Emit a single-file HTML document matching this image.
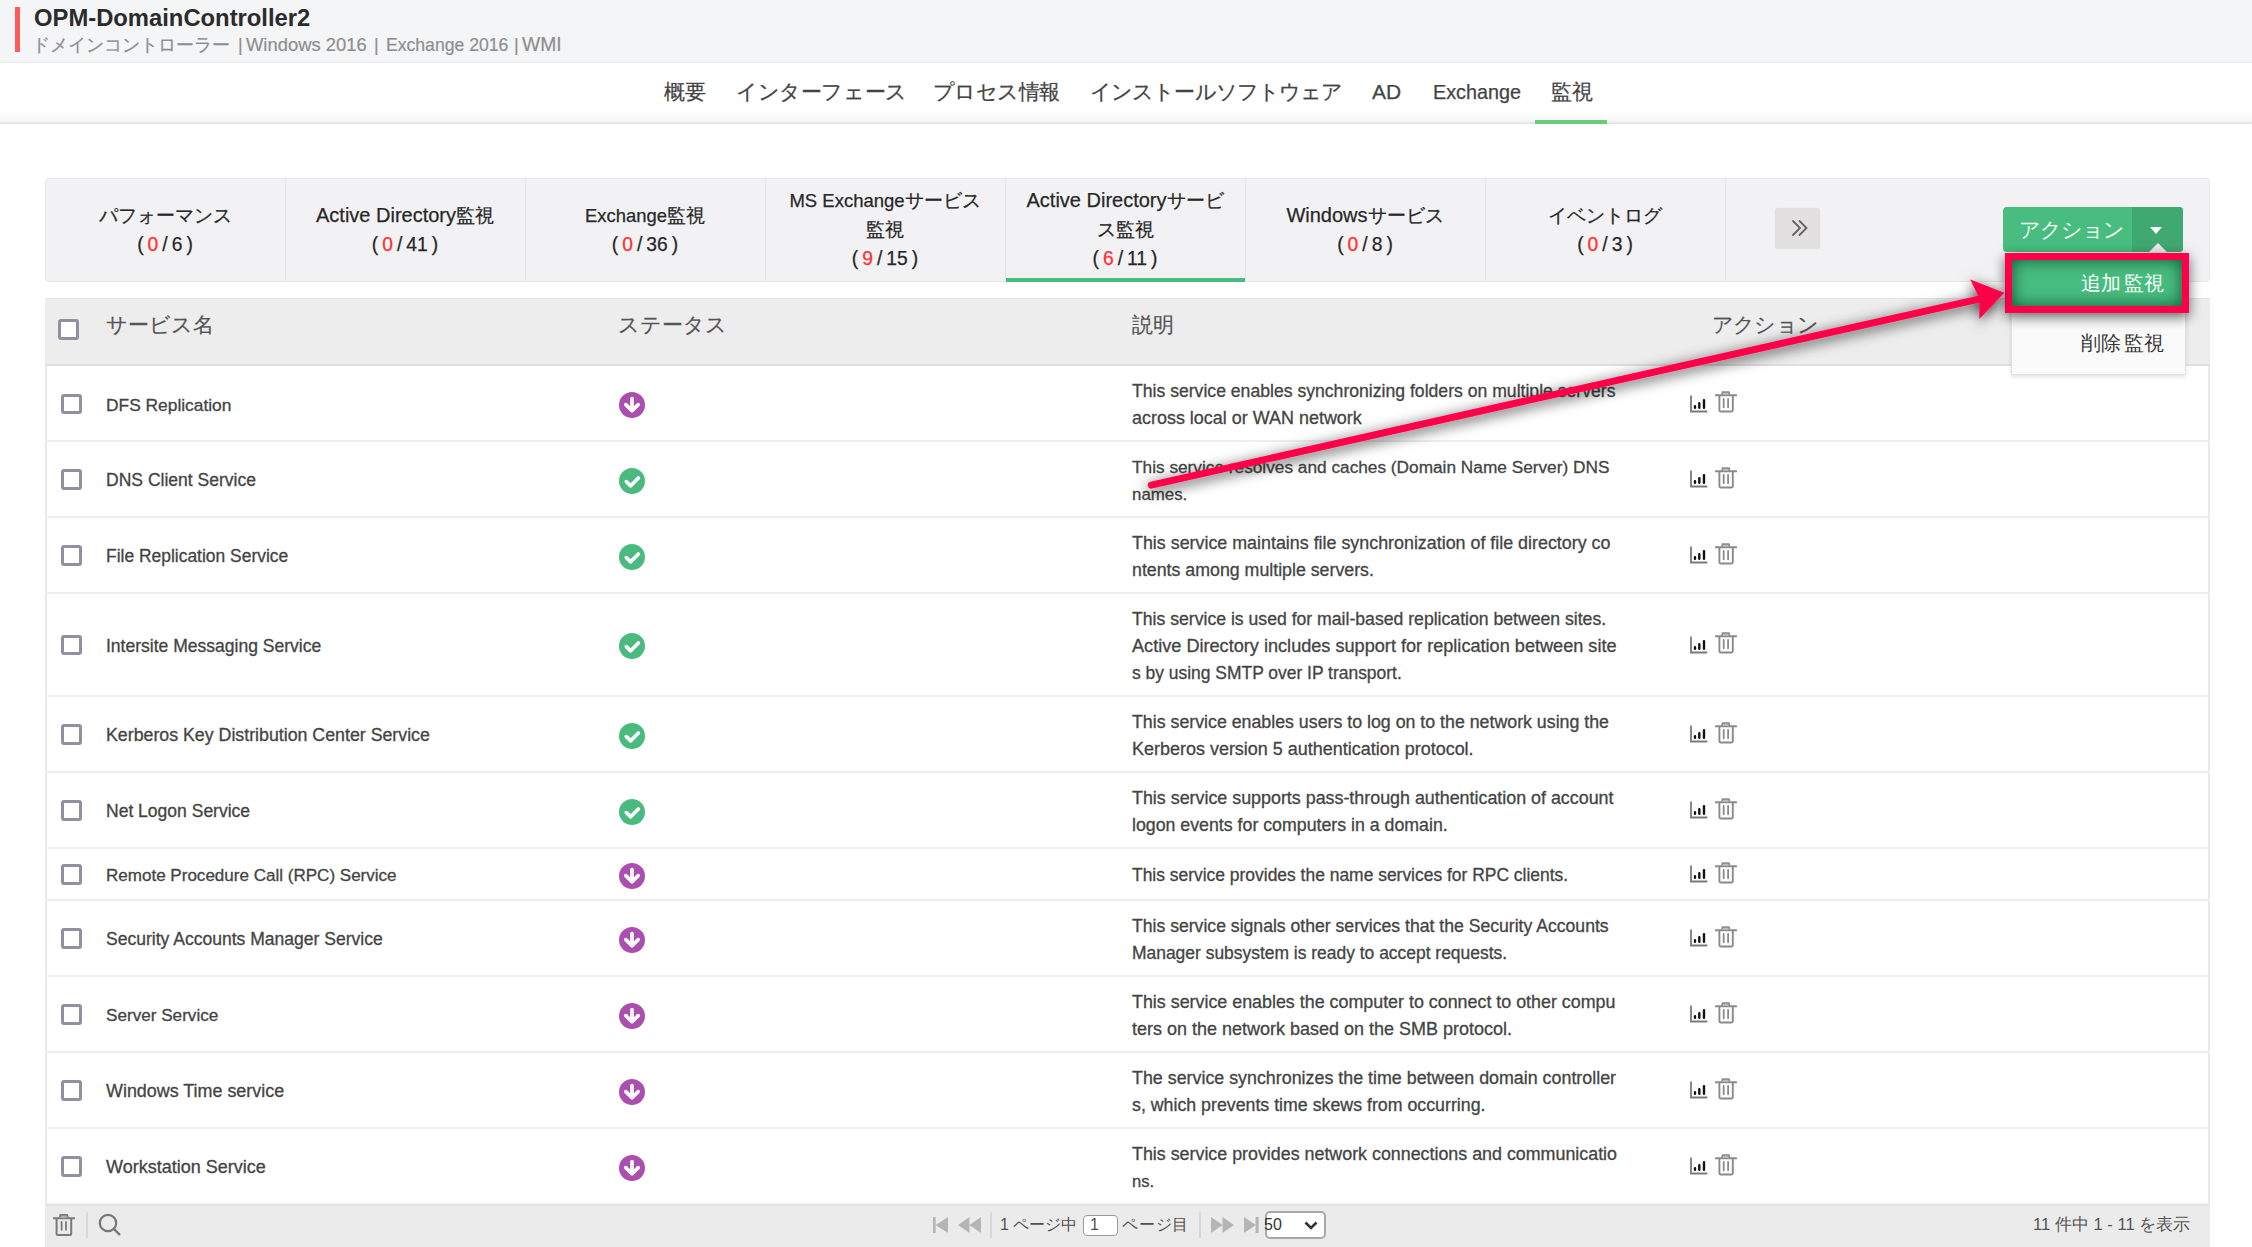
<!DOCTYPE html>
<html lang="ja"><head><meta charset="utf-8">
<style>
*{box-sizing:border-box;margin:0;padding:0}
html,body{width:2252px;height:1247px;overflow:hidden;background:#fff}
body{position:relative;font-family:"Liberation Sans",sans-serif;color:#333}
.a{position:absolute;white-space:nowrap}
#hdr{left:0;top:0;width:2252px;height:63px;background:#f4f5f7}
#redbar{left:15px;top:7px;width:5px;height:45px;background:#fe5a5e}
#title{left:34px;top:3px;font-size:23.8px;line-height:30px;font-weight:bold;color:#2b2b2b}
#sub{left:35px;top:33px;font-size:18px;line-height:24px;color:#8e8e8e;-webkit-text-stroke-width:0.2px}
#nav{left:0;top:63px;width:2252px;height:61px;background:linear-gradient(#fff 0,#fff 48px,#f6f6f6 58px,#e4e4e4 60px);}
.nv{font-size:21px;line-height:28px;color:#444;top:78px;-webkit-text-stroke-width:0.25px}
#navline{left:1535px;top:120px;width:72px;height:4px;background:#69ca7c}
#panel{left:45px;top:178px;width:2165px;height:104px;background:#f2f2f4;border:1px solid #e7e7ea;border-radius:4px}
.sep{top:179px;width:1px;height:102px;background:#e3e3e6}
.tab{width:240px;text-align:center;font-size:19.3px;line-height:29px;color:#282828;white-space:nowrap;-webkit-text-stroke-width:0.25px}
.tab i{font-style:normal;color:#ff3030}
.tab .n i,.tab .n b{margin:0 4px;font-weight:normal}.tab .n b{color:#282828}
#tabline{left:1006px;top:278px;width:239px;height:4px;background:#48bd7f}
#more{left:1775px;top:208px;width:45px;height:41px;background:#e2e0e1;border-radius:3px;box-shadow:0 0 2px rgba(0,0,0,.06)}
#actbtn{left:2003px;top:207px;width:180px;height:45px;border-radius:4px;background:#48bd7f;overflow:hidden}
#actbtn .r{position:absolute;left:129px;top:0;width:51px;height:45px;background:#40a971}
#tbl{left:45px;top:298px;width:2165px;height:949px;border-left:2px solid #e9e9e9;border-right:2px solid #e9e9e9}
#thead{left:45px;top:298px;width:2165px;height:68px;background:#ededed;border-top:1px solid #e4e4e4;border-bottom:2px solid #dedede}
.th{font-size:21px;line-height:28px;color:#555;top:311px;-webkit-text-stroke-width:0.2px}
.cb{width:20.5px;height:20.5px;border:3px solid #9090a2;border-radius:3px;background:#fff}
.row{left:45px;width:2165px;border-bottom:2px solid #eeeeee}
.nm{left:106px;font-size:17.7px;line-height:27px;color:#444;-webkit-text-stroke-width:0.3px}
.ds{left:1132px;font-size:17.7px;line-height:27px;color:#444;-webkit-text-stroke-width:0.3px}
#foot{left:45px;top:1204px;width:2165px;height:43px;background:#ebebeb;border-top:2px solid #e3e3e3}
.pg{font-size:16px;line-height:20px;color:#505050;top:1214.5px}
</style></head><body>
<div class="a" id="hdr"></div>
<div class="a" id="redbar"></div>
<div class="a" id="title">OPM-DomainController2</div>
<div class="a" id="sub" style="left:32px">ドメインコントローラー</div><div class="a" id="sub" style="left:238px">|</div><div class="a" id="sub" style="left:246px;font-size:18.4px">Windows 2016</div><div class="a" id="sub" style="left:374px">|</div><div class="a" id="sub" style="left:386px;font-size:17.6px">Exchange 2016</div><div class="a" id="sub" style="left:514px">|</div><div class="a" id="sub" style="left:522px;font-size:19.3px">WMI</div>
<div class="a" id="nav"></div><div class="a" style="left:0;top:62px;width:2252px;height:1px;background:#ebecee"></div>
<div class="a nv" style="left:664px">概要</div>
<div class="a nv" style="left:736px;letter-spacing:-0.4px">インターフェース</div>
<div class="a nv" style="left:933px;letter-spacing:-0.6px">プロセス情報</div>
<div class="a nv" style="left:1090px;letter-spacing:-0.9px">インストールソフトウェア</div>
<div class="a nv" style="left:1372px;font-size:21px">AD</div>
<div class="a nv" style="left:1433px;font-size:19.8px">Exchange</div>
<div class="a nv" style="left:1551px">監視</div>
<div class="a" id="navline"></div>

<div class="a" id="panel"></div>
<div class="a sep" style="left:285px"></div>
<div class="a sep" style="left:525px"></div>
<div class="a sep" style="left:765px"></div>
<div class="a sep" style="left:1005px"></div>
<div class="a sep" style="left:1245px"></div>
<div class="a sep" style="left:1485px"></div>
<div class="a sep" style="left:1725px"></div>
<div class="a tab" style="left:45px;top:201px">パフォーマンス<br><span class="n">(<i>0</i>/<b>6</b>)</span></div>
<div class="a tab" style="left:285px;top:201px"><span style="font-size:20px">Active Directory</span>監視<br><span class="n">(<i>0</i>/<b>41</b>)</span></div>
<div class="a tab" style="left:525px;top:201px"><span style="font-size:18.4px">Exchange</span>監視<br><span class="n">(<i>0</i>/<b>36</b>)</span></div>
<div class="a tab" style="left:765px;top:186px"><span style="font-size:18.5px">MS Exchange</span>サービス<br>監視<br><span class="n">(<i>9</i>/<b>15</b>)</span></div>
<div class="a tab" style="left:1005px;top:186px"><span style="font-size:20px">Active Directory</span>サービ<br>ス監視<br><span class="n">(<i>6</i>/<b>11</b>)</span></div>
<div class="a tab" style="left:1245px;top:201px"><span style="font-size:20px">Windows</span>サービス<br><span class="n">(<i>0</i>/<b>8</b>)</span></div>
<div class="a tab" style="left:1485px;top:201px">イベントログ<br><span class="n">(<i>0</i>/<b>3</b>)</span></div>
<div class="a" id="tabline"></div>
<div class="a" id="more"></div>
<div class="a" id="actbtn"><div class="r"></div></div>

<div class="a" id="tbl"></div>
<div class="a" id="thead"></div>
<div class="a cb" style="left:58px;top:319px"></div>
<div class="a th" style="left:106px">サービス名</div>
<div class="a th" style="left:618px">ステータス</div>
<div class="a th" style="left:1132px">説明</div>
<div class="a th" style="left:1712px;letter-spacing:-0.8px">アクション</div>
<div class="a row" style="top:366px;height:76px"></div>
<div class="a cb" style="left:61px;top:393.5px"></div>
<div class="a nm" style="top:391.8px;font-size:17.38px">DFS Replication</div>
<svg class="a" style="left:619px;top:392.2px" width="26" height="26" viewBox="0 0 26 26"><circle cx="13" cy="13" r="13" fill="#ab4fae"/><path d="M13 6.6V18M6.8 12.6L13 18.8L19.2 12.6" stroke="#fff" stroke-width="3.7" fill="none" stroke-linecap="round" stroke-linejoin="round"/></svg>
<div class="a ds" style="top:378.3px"><span style="font-size:17.62px">This service enables synchronizing folders on multiple servers</span><br><span style="font-size:17.97px">across local or WAN network</span></div>
<svg class="a" style="left:1690px;top:394.5px" width="18" height="18" viewBox="0 0 18 18"><path d="M1 1.2V16.5H16.6" stroke="#7a7a7a" stroke-width="1.8" fill="none" stroke-linecap="round"/><path d="M5 11.3V12.8M9.3 8.3V12.8M14 5.1V12.8" stroke="#111" stroke-width="2.4" stroke-linecap="round"/></svg>
<svg class="a" style="left:1715px;top:391.0px" width="22" height="22" viewBox="0 0 22 22"><path d="M0.8 4.2H21.2" stroke="#8a8a8a" stroke-width="2" stroke-linecap="round"/><path d="M6.9 3.8L7.5 1H14L14.6 3.8" stroke="#8a8a8a" stroke-width="1.6" fill="#bbb" /><path d="M4.4 4.5V19.3Q4.4 20.5 5.6 20.5H16.6Q17.8 20.5 17.8 19.3V4.5" stroke="#8a8a8a" stroke-width="1.9" fill="none"/><path d="M8.7 8V16.3M13.1 8V16.3" stroke="#8a8a8a" stroke-width="1.8" stroke-linecap="round"/></svg>
<div class="a row" style="top:441px;height:77px"></div>
<div class="a cb" style="left:61px;top:469.0px"></div>
<div class="a nm" style="top:467.3px;font-size:17.55px">DNS Client Service</div>
<svg class="a" style="left:619px;top:467.7px" width="26" height="26" viewBox="0 0 26 26"><circle cx="13" cy="13" r="13" fill="#4aba7f"/><path d="M7.3 13.6L11.7 17.8L19.4 10" stroke="#fff" stroke-width="3.7" fill="none" stroke-linecap="round" stroke-linejoin="round"/></svg>
<div class="a ds" style="top:453.8px"><span style="font-size:17.26px">This service resolves and caches (Domain Name Server) DNS</span><br><span style="font-size:16.88px">names.</span></div>
<svg class="a" style="left:1690px;top:470.0px" width="18" height="18" viewBox="0 0 18 18"><path d="M1 1.2V16.5H16.6" stroke="#7a7a7a" stroke-width="1.8" fill="none" stroke-linecap="round"/><path d="M5 11.3V12.8M9.3 8.3V12.8M14 5.1V12.8" stroke="#111" stroke-width="2.4" stroke-linecap="round"/></svg>
<svg class="a" style="left:1715px;top:466.5px" width="22" height="22" viewBox="0 0 22 22"><path d="M0.8 4.2H21.2" stroke="#8a8a8a" stroke-width="2" stroke-linecap="round"/><path d="M6.9 3.8L7.5 1H14L14.6 3.8" stroke="#8a8a8a" stroke-width="1.6" fill="#bbb" /><path d="M4.4 4.5V19.3Q4.4 20.5 5.6 20.5H16.6Q17.8 20.5 17.8 19.3V4.5" stroke="#8a8a8a" stroke-width="1.9" fill="none"/><path d="M8.7 8V16.3M13.1 8V16.3" stroke="#8a8a8a" stroke-width="1.8" stroke-linecap="round"/></svg>
<div class="a row" style="top:517px;height:77px"></div>
<div class="a cb" style="left:61px;top:545.0px"></div>
<div class="a nm" style="top:543.3px;font-size:17.45px">File Replication Service</div>
<svg class="a" style="left:619px;top:543.7px" width="26" height="26" viewBox="0 0 26 26"><circle cx="13" cy="13" r="13" fill="#4aba7f"/><path d="M7.3 13.6L11.7 17.8L19.4 10" stroke="#fff" stroke-width="3.7" fill="none" stroke-linecap="round" stroke-linejoin="round"/></svg>
<div class="a ds" style="top:529.8px"><span style="font-size:17.86px">This service maintains file synchronization of file directory co</span><br><span style="font-size:17.78px">ntents among multiple servers.</span></div>
<svg class="a" style="left:1690px;top:546.0px" width="18" height="18" viewBox="0 0 18 18"><path d="M1 1.2V16.5H16.6" stroke="#7a7a7a" stroke-width="1.8" fill="none" stroke-linecap="round"/><path d="M5 11.3V12.8M9.3 8.3V12.8M14 5.1V12.8" stroke="#111" stroke-width="2.4" stroke-linecap="round"/></svg>
<svg class="a" style="left:1715px;top:542.5px" width="22" height="22" viewBox="0 0 22 22"><path d="M0.8 4.2H21.2" stroke="#8a8a8a" stroke-width="2" stroke-linecap="round"/><path d="M6.9 3.8L7.5 1H14L14.6 3.8" stroke="#8a8a8a" stroke-width="1.6" fill="#bbb" /><path d="M4.4 4.5V19.3Q4.4 20.5 5.6 20.5H16.6Q17.8 20.5 17.8 19.3V4.5" stroke="#8a8a8a" stroke-width="1.9" fill="none"/><path d="M8.7 8V16.3M13.1 8V16.3" stroke="#8a8a8a" stroke-width="1.8" stroke-linecap="round"/></svg>
<div class="a row" style="top:593px;height:104px"></div>
<div class="a cb" style="left:61px;top:634.5px"></div>
<div class="a nm" style="top:632.8px;font-size:17.53px">Intersite Messaging Service</div>
<svg class="a" style="left:619px;top:633.2px" width="26" height="26" viewBox="0 0 26 26"><circle cx="13" cy="13" r="13" fill="#4aba7f"/><path d="M7.3 13.6L11.7 17.8L19.4 10" stroke="#fff" stroke-width="3.7" fill="none" stroke-linecap="round" stroke-linejoin="round"/></svg>
<div class="a ds" style="top:605.8px"><span style="font-size:17.64px">This service is used for mail-based replication between sites.</span><br><span style="font-size:18.14px">Active Directory includes support for replication between site</span><br><span style="font-size:17.47px">s by using SMTP over IP transport.</span></div>
<svg class="a" style="left:1690px;top:635.5px" width="18" height="18" viewBox="0 0 18 18"><path d="M1 1.2V16.5H16.6" stroke="#7a7a7a" stroke-width="1.8" fill="none" stroke-linecap="round"/><path d="M5 11.3V12.8M9.3 8.3V12.8M14 5.1V12.8" stroke="#111" stroke-width="2.4" stroke-linecap="round"/></svg>
<svg class="a" style="left:1715px;top:632.0px" width="22" height="22" viewBox="0 0 22 22"><path d="M0.8 4.2H21.2" stroke="#8a8a8a" stroke-width="2" stroke-linecap="round"/><path d="M6.9 3.8L7.5 1H14L14.6 3.8" stroke="#8a8a8a" stroke-width="1.6" fill="#bbb" /><path d="M4.4 4.5V19.3Q4.4 20.5 5.6 20.5H16.6Q17.8 20.5 17.8 19.3V4.5" stroke="#8a8a8a" stroke-width="1.9" fill="none"/><path d="M8.7 8V16.3M13.1 8V16.3" stroke="#8a8a8a" stroke-width="1.8" stroke-linecap="round"/></svg>
<div class="a row" style="top:696px;height:77px"></div>
<div class="a cb" style="left:61px;top:724.0px"></div>
<div class="a nm" style="top:722.3px;font-size:17.77px">Kerberos Key Distribution Center Service</div>
<svg class="a" style="left:619px;top:722.7px" width="26" height="26" viewBox="0 0 26 26"><circle cx="13" cy="13" r="13" fill="#4aba7f"/><path d="M7.3 13.6L11.7 17.8L19.4 10" stroke="#fff" stroke-width="3.7" fill="none" stroke-linecap="round" stroke-linejoin="round"/></svg>
<div class="a ds" style="top:708.8px"><span style="font-size:17.77px">This service enables users to log on to the network using the</span><br><span style="font-size:17.98px">Kerberos version 5 authentication protocol.</span></div>
<svg class="a" style="left:1690px;top:725.0px" width="18" height="18" viewBox="0 0 18 18"><path d="M1 1.2V16.5H16.6" stroke="#7a7a7a" stroke-width="1.8" fill="none" stroke-linecap="round"/><path d="M5 11.3V12.8M9.3 8.3V12.8M14 5.1V12.8" stroke="#111" stroke-width="2.4" stroke-linecap="round"/></svg>
<svg class="a" style="left:1715px;top:721.5px" width="22" height="22" viewBox="0 0 22 22"><path d="M0.8 4.2H21.2" stroke="#8a8a8a" stroke-width="2" stroke-linecap="round"/><path d="M6.9 3.8L7.5 1H14L14.6 3.8" stroke="#8a8a8a" stroke-width="1.6" fill="#bbb" /><path d="M4.4 4.5V19.3Q4.4 20.5 5.6 20.5H16.6Q17.8 20.5 17.8 19.3V4.5" stroke="#8a8a8a" stroke-width="1.9" fill="none"/><path d="M8.7 8V16.3M13.1 8V16.3" stroke="#8a8a8a" stroke-width="1.8" stroke-linecap="round"/></svg>
<div class="a row" style="top:772px;height:77px"></div>
<div class="a cb" style="left:61px;top:800.0px"></div>
<div class="a nm" style="top:798.3px;font-size:17.52px">Net Logon Service</div>
<svg class="a" style="left:619px;top:798.7px" width="26" height="26" viewBox="0 0 26 26"><circle cx="13" cy="13" r="13" fill="#4aba7f"/><path d="M7.3 13.6L11.7 17.8L19.4 10" stroke="#fff" stroke-width="3.7" fill="none" stroke-linecap="round" stroke-linejoin="round"/></svg>
<div class="a ds" style="top:784.8px"><span style="font-size:17.86px">This service supports pass-through authentication of account</span><br><span style="font-size:17.75px">logon events for computers in a domain.</span></div>
<svg class="a" style="left:1690px;top:801.0px" width="18" height="18" viewBox="0 0 18 18"><path d="M1 1.2V16.5H16.6" stroke="#7a7a7a" stroke-width="1.8" fill="none" stroke-linecap="round"/><path d="M5 11.3V12.8M9.3 8.3V12.8M14 5.1V12.8" stroke="#111" stroke-width="2.4" stroke-linecap="round"/></svg>
<svg class="a" style="left:1715px;top:797.5px" width="22" height="22" viewBox="0 0 22 22"><path d="M0.8 4.2H21.2" stroke="#8a8a8a" stroke-width="2" stroke-linecap="round"/><path d="M6.9 3.8L7.5 1H14L14.6 3.8" stroke="#8a8a8a" stroke-width="1.6" fill="#bbb" /><path d="M4.4 4.5V19.3Q4.4 20.5 5.6 20.5H16.6Q17.8 20.5 17.8 19.3V4.5" stroke="#8a8a8a" stroke-width="1.9" fill="none"/><path d="M8.7 8V16.3M13.1 8V16.3" stroke="#8a8a8a" stroke-width="1.8" stroke-linecap="round"/></svg>
<div class="a row" style="top:848px;height:53px"></div>
<div class="a cb" style="left:61px;top:864.0px"></div>
<div class="a nm" style="top:862.3px;font-size:17.04px">Remote Procedure Call (RPC) Service</div>
<svg class="a" style="left:619px;top:862.7px" width="26" height="26" viewBox="0 0 26 26"><circle cx="13" cy="13" r="13" fill="#ab4fae"/><path d="M13 6.6V18M6.8 12.6L13 18.8L19.2 12.6" stroke="#fff" stroke-width="3.7" fill="none" stroke-linecap="round" stroke-linejoin="round"/></svg>
<div class="a ds" style="top:862.3px"><span style="font-size:17.44px">This service provides the name services for RPC clients.</span></div>
<svg class="a" style="left:1690px;top:865.0px" width="18" height="18" viewBox="0 0 18 18"><path d="M1 1.2V16.5H16.6" stroke="#7a7a7a" stroke-width="1.8" fill="none" stroke-linecap="round"/><path d="M5 11.3V12.8M9.3 8.3V12.8M14 5.1V12.8" stroke="#111" stroke-width="2.4" stroke-linecap="round"/></svg>
<svg class="a" style="left:1715px;top:861.5px" width="22" height="22" viewBox="0 0 22 22"><path d="M0.8 4.2H21.2" stroke="#8a8a8a" stroke-width="2" stroke-linecap="round"/><path d="M6.9 3.8L7.5 1H14L14.6 3.8" stroke="#8a8a8a" stroke-width="1.6" fill="#bbb" /><path d="M4.4 4.5V19.3Q4.4 20.5 5.6 20.5H16.6Q17.8 20.5 17.8 19.3V4.5" stroke="#8a8a8a" stroke-width="1.9" fill="none"/><path d="M8.7 8V16.3M13.1 8V16.3" stroke="#8a8a8a" stroke-width="1.8" stroke-linecap="round"/></svg>
<div class="a row" style="top:900px;height:77px"></div>
<div class="a cb" style="left:61px;top:928.0px"></div>
<div class="a nm" style="top:926.3px;font-size:17.55px">Security Accounts Manager Service</div>
<svg class="a" style="left:619px;top:926.7px" width="26" height="26" viewBox="0 0 26 26"><circle cx="13" cy="13" r="13" fill="#ab4fae"/><path d="M13 6.6V18M6.8 12.6L13 18.8L19.2 12.6" stroke="#fff" stroke-width="3.7" fill="none" stroke-linecap="round" stroke-linejoin="round"/></svg>
<div class="a ds" style="top:912.8px"><span style="font-size:17.63px">This service signals other services that the Security Accounts</span><br><span style="font-size:17.47px">Manager subsystem is ready to accept requests.</span></div>
<svg class="a" style="left:1690px;top:929.0px" width="18" height="18" viewBox="0 0 18 18"><path d="M1 1.2V16.5H16.6" stroke="#7a7a7a" stroke-width="1.8" fill="none" stroke-linecap="round"/><path d="M5 11.3V12.8M9.3 8.3V12.8M14 5.1V12.8" stroke="#111" stroke-width="2.4" stroke-linecap="round"/></svg>
<svg class="a" style="left:1715px;top:925.5px" width="22" height="22" viewBox="0 0 22 22"><path d="M0.8 4.2H21.2" stroke="#8a8a8a" stroke-width="2" stroke-linecap="round"/><path d="M6.9 3.8L7.5 1H14L14.6 3.8" stroke="#8a8a8a" stroke-width="1.6" fill="#bbb" /><path d="M4.4 4.5V19.3Q4.4 20.5 5.6 20.5H16.6Q17.8 20.5 17.8 19.3V4.5" stroke="#8a8a8a" stroke-width="1.9" fill="none"/><path d="M8.7 8V16.3M13.1 8V16.3" stroke="#8a8a8a" stroke-width="1.8" stroke-linecap="round"/></svg>
<div class="a row" style="top:976px;height:77px"></div>
<div class="a cb" style="left:61px;top:1004.0px"></div>
<div class="a nm" style="top:1002.3px;font-size:17.14px">Server Service</div>
<svg class="a" style="left:619px;top:1002.7px" width="26" height="26" viewBox="0 0 26 26"><circle cx="13" cy="13" r="13" fill="#ab4fae"/><path d="M13 6.6V18M6.8 12.6L13 18.8L19.2 12.6" stroke="#fff" stroke-width="3.7" fill="none" stroke-linecap="round" stroke-linejoin="round"/></svg>
<div class="a ds" style="top:988.8px"><span style="font-size:17.86px">This service enables the computer to connect to other compu</span><br><span style="font-size:17.99px">ters on the network based on the SMB protocol.</span></div>
<svg class="a" style="left:1690px;top:1005.0px" width="18" height="18" viewBox="0 0 18 18"><path d="M1 1.2V16.5H16.6" stroke="#7a7a7a" stroke-width="1.8" fill="none" stroke-linecap="round"/><path d="M5 11.3V12.8M9.3 8.3V12.8M14 5.1V12.8" stroke="#111" stroke-width="2.4" stroke-linecap="round"/></svg>
<svg class="a" style="left:1715px;top:1001.5px" width="22" height="22" viewBox="0 0 22 22"><path d="M0.8 4.2H21.2" stroke="#8a8a8a" stroke-width="2" stroke-linecap="round"/><path d="M6.9 3.8L7.5 1H14L14.6 3.8" stroke="#8a8a8a" stroke-width="1.6" fill="#bbb" /><path d="M4.4 4.5V19.3Q4.4 20.5 5.6 20.5H16.6Q17.8 20.5 17.8 19.3V4.5" stroke="#8a8a8a" stroke-width="1.9" fill="none"/><path d="M8.7 8V16.3M13.1 8V16.3" stroke="#8a8a8a" stroke-width="1.8" stroke-linecap="round"/></svg>
<div class="a row" style="top:1052px;height:77px"></div>
<div class="a cb" style="left:61px;top:1080.0px"></div>
<div class="a nm" style="top:1078.3px;font-size:17.92px">Windows Time service</div>
<svg class="a" style="left:619px;top:1078.7px" width="26" height="26" viewBox="0 0 26 26"><circle cx="13" cy="13" r="13" fill="#ab4fae"/><path d="M13 6.6V18M6.8 12.6L13 18.8L19.2 12.6" stroke="#fff" stroke-width="3.7" fill="none" stroke-linecap="round" stroke-linejoin="round"/></svg>
<div class="a ds" style="top:1064.8px"><span style="font-size:17.85px">The service synchronizes the time between domain controller</span><br><span style="font-size:17.77px">s, which prevents time skews from occurring.</span></div>
<svg class="a" style="left:1690px;top:1081.0px" width="18" height="18" viewBox="0 0 18 18"><path d="M1 1.2V16.5H16.6" stroke="#7a7a7a" stroke-width="1.8" fill="none" stroke-linecap="round"/><path d="M5 11.3V12.8M9.3 8.3V12.8M14 5.1V12.8" stroke="#111" stroke-width="2.4" stroke-linecap="round"/></svg>
<svg class="a" style="left:1715px;top:1077.5px" width="22" height="22" viewBox="0 0 22 22"><path d="M0.8 4.2H21.2" stroke="#8a8a8a" stroke-width="2" stroke-linecap="round"/><path d="M6.9 3.8L7.5 1H14L14.6 3.8" stroke="#8a8a8a" stroke-width="1.6" fill="#bbb" /><path d="M4.4 4.5V19.3Q4.4 20.5 5.6 20.5H16.6Q17.8 20.5 17.8 19.3V4.5" stroke="#8a8a8a" stroke-width="1.9" fill="none"/><path d="M8.7 8V16.3M13.1 8V16.3" stroke="#8a8a8a" stroke-width="1.8" stroke-linecap="round"/></svg>
<div class="a row" style="top:1128px;height:77px"></div>
<div class="a cb" style="left:61px;top:1156.0px"></div>
<div class="a nm" style="top:1154.3px;font-size:18.02px">Workstation Service</div>
<svg class="a" style="left:619px;top:1154.7px" width="26" height="26" viewBox="0 0 26 26"><circle cx="13" cy="13" r="13" fill="#ab4fae"/><path d="M13 6.6V18M6.8 12.6L13 18.8L19.2 12.6" stroke="#fff" stroke-width="3.7" fill="none" stroke-linecap="round" stroke-linejoin="round"/></svg>
<div class="a ds" style="top:1140.8px"><span style="font-size:17.85px">This service provides network connections and communicatio</span><br><span style="font-size:16.56px">ns.</span></div>
<svg class="a" style="left:1690px;top:1157.0px" width="18" height="18" viewBox="0 0 18 18"><path d="M1 1.2V16.5H16.6" stroke="#7a7a7a" stroke-width="1.8" fill="none" stroke-linecap="round"/><path d="M5 11.3V12.8M9.3 8.3V12.8M14 5.1V12.8" stroke="#111" stroke-width="2.4" stroke-linecap="round"/></svg>
<svg class="a" style="left:1715px;top:1153.5px" width="22" height="22" viewBox="0 0 22 22"><path d="M0.8 4.2H21.2" stroke="#8a8a8a" stroke-width="2" stroke-linecap="round"/><path d="M6.9 3.8L7.5 1H14L14.6 3.8" stroke="#8a8a8a" stroke-width="1.6" fill="#bbb" /><path d="M4.4 4.5V19.3Q4.4 20.5 5.6 20.5H16.6Q17.8 20.5 17.8 19.3V4.5" stroke="#8a8a8a" stroke-width="1.9" fill="none"/><path d="M8.7 8V16.3M13.1 8V16.3" stroke="#8a8a8a" stroke-width="1.8" stroke-linecap="round"/></svg>
<div class="a" id="foot"></div>
<svg class="a" style="left:53px;top:1214px" width="22" height="22" viewBox="0 0 22 22"><path d="M0.8 4.2H21.2" stroke="#7a7a7a" stroke-width="2" stroke-linecap="round"/><path d="M6.6 3.8L7.3 0.9H14.2L14.9 3.8" stroke="#7a7a7a" stroke-width="1.6" fill="#b0b0b0"/><path d="M3.6 4.5V19.8Q3.6 21 4.8 21H17Q18.2 21 18.2 19.8V4.5" stroke="#7a7a7a" stroke-width="2" fill="none"/><path d="M8.6 8V15.8M13 8V15.8" stroke="#7a7a7a" stroke-width="1.8" stroke-linecap="round"/></svg>
<div class="a" style="left:86px;top:1212px;width:1.5px;height:26px;background:#d8d8d8"></div>
<svg class="a" style="left:96px;top:1211px" width="26" height="26" viewBox="0 0 26 26"><circle cx="12" cy="12" r="8.2" stroke="#777" stroke-width="2.2" fill="none"/><path d="M17.8 17.8L23.3 23.3" stroke="#777" stroke-width="2.4" stroke-linecap="round"/></svg>
<svg class="a" style="left:932px;top:1216px" width="52" height="18" viewBox="0 0 52 18"><rect x="1" y="1" width="2.6" height="16" fill="#b5b5b5"/><path d="M3.6 9L16 1V17Z" fill="#b5b5b5"/><path d="M26 9L37.5 1V17ZM37.5 9L49 1V17Z" fill="#b5b5b5"/></svg>
<div class="a" style="left:990px;top:1212px;width:1.5px;height:26px;background:#d8d8d8"></div>
<div class="a pg" style="left:1000px">1 ページ中</div>
<div class="a" style="left:1083px;top:1215px;width:35px;height:21px;background:#fff;border:1.5px solid #9a9a9a;border-radius:4px"></div>
<div class="a pg" style="left:1090px;top:1215px">1</div>
<div class="a pg" style="left:1122px;letter-spacing:0.8px">ページ目</div>
<div class="a" style="left:1199px;top:1212px;width:1.5px;height:26px;background:#d8d8d8"></div>
<svg class="a" style="left:1210px;top:1216px" width="52" height="18" viewBox="0 0 52 18"><path d="M1 1L12.5 9L1 17ZM12.5 1L24 9L12.5 17Z" fill="#b5b5b5"/><path d="M34 1L46 9L34 17Z" fill="#b5b5b5"/><rect x="45.6" y="1" width="3" height="16" fill="#b5b5b5"/></svg>
<div class="a" style="left:1265px;top:1211px;width:61px;height:28px;background:#fff;border:2px solid #a8a8a8;border-radius:5px"></div>
<div class="a pg" style="left:1264px;top:1215px;color:#333">50</div>
<svg class="a" style="left:1303px;top:1219px" width="16" height="12" viewBox="0 0 16 12"><path d="M2.5 3.5L8 9L13.5 3.5" stroke="#333" stroke-width="2.6" fill="none"/></svg>
<div class="a pg" style="left:2033px;top:1215px;font-size:16.6px;color:#555">11 件中 1 - 11 を表示</div>

<svg class="a" style="left:1788px;top:217px" width="24" height="22" viewBox="0 0 24 22"><path d="M5 4L12 11L5 18M11.5 4L18.5 11L11.5 18" stroke="#666" stroke-width="1.9" fill="none" stroke-linecap="round"/></svg>
<div class="a" style="left:2019px;top:216px;font-size:20.5px;line-height:28px;color:#f4fff8;letter-spacing:-1px">アクション</div>
<svg class="a" style="left:2149px;top:226px" width="14" height="9" viewBox="0 0 14 9"><path d="M1 1H13L7 8Z" fill="#fff"/></svg>
<div class="a" style="left:2011px;top:253px;width:175px;height:122px;background:#fafafa;border:1px solid #e2e2e2;box-shadow:0 2px 4px rgba(0,0,0,.12)"></div>
<svg class="a" style="left:2147px;top:242px" width="22" height="12" viewBox="0 0 22 12"><path d="M0 12L11 1L22 12Z" fill="#ececec"/></svg>
<div class="a" style="left:2005px;top:253px;width:184px;height:60px;border:7px solid #fe0049;box-shadow:0 4px 12px rgba(0,0,0,.6)"></div>
<div class="a" style="left:2012px;top:260px;width:170px;height:46px;background:#47bd80;box-shadow:inset 0 0 16px rgba(0,50,25,.75)"></div>
<div class="a" style="left:2081px;top:269px;font-size:19.5px;line-height:28px;color:#fff;word-spacing:-2px">追加 監視</div>
<div class="a" style="left:2081px;top:329px;font-size:19.5px;line-height:28px;color:#333;word-spacing:-2px">削除 監視</div>
<svg class="a" style="left:0;top:0" width="2252" height="1247" viewBox="0 0 2252 1247">
<defs><filter id="sh" x="-20%" y="-50%" width="140%" height="200%"><feDropShadow dx="0" dy="3" stdDeviation="7" flood-color="#000" flood-opacity="0.8"/></filter></defs>
<g filter="url(#sh)">
<path d="M1151.3 485.1L1980 298.8" stroke="#fe0049" stroke-width="7" stroke-linecap="round"/>
<path d="M2004.3 292.7L1970.3 279.5L1979.6 298.8L1979.3 319Z" fill="#fe0049"/>
</g>
</svg>

</body></html>
